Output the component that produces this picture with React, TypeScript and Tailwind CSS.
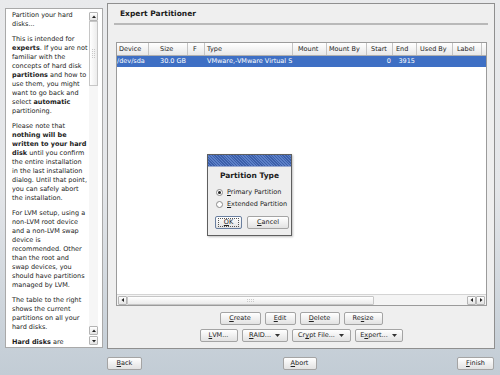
import React from "react";

type Seg = string | { b: string };

const helpText: Seg[][][] = [
  [["Partition your hard"], ["disks..."]],
  [
    ["This is intended for"],
    [{ b: "experts" }, ". If you are not"],
    ["familiar with the"],
    ["concepts of hard disk"],
    [{ b: "partitions" }, " and how to"],
    ["use them, you might"],
    ["want to go back and"],
    ["select ", { b: "automatic" }],
    ["partitioning."],
  ],
  [
    ["Please note that"],
    [{ b: "nothing will be" }],
    [{ b: "written to your hard" }],
    [{ b: "disk" }, " until you confirm"],
    ["the entire installation"],
    ["in the last installation"],
    ["dialog. Until that point,"],
    ["you can safely abort"],
    ["the installation."],
  ],
  [
    ["For LVM setup, using a"],
    ["non-LVM root device"],
    ["and a non-LVM swap"],
    ["device is"],
    ["recommended. Other"],
    ["than the root and"],
    ["swap devices, you"],
    ["should have partitions"],
    ["managed by LVM."],
  ],
  [
    ["The table to the right"],
    ["shows the current"],
    ["partitions on all your"],
    ["hard disks."],
  ],
  [[{ b: "Hard disks" }, " are"]],
];

const columns = [
  { name: "Device", w: "w-[32px]", pl: "pl-[2px]", value: "/dev/sda", align: "left" },
  { name: "Size", w: "w-[39px]", pl: "pl-[11px]", value: "30.0 GB", align: "left" },
  { name: "F", w: "w-[17px]", pl: "pl-[5px]", value: "", align: "left" },
  { name: "Type", w: "w-[88px]", pl: "pl-[2px]", value: "VMware,-VMware Virtual S", align: "left" },
  { name: "Mount", w: "w-[34px]", pl: "pl-[5px]", value: "", align: "left" },
  { name: "Mount By", w: "w-[40px]", pl: "pl-[2px]", value: "", align: "left" },
  { name: "Start", w: "w-[26px]", pl: "pl-[4px]", value: "0", align: "right" },
  { name: "End", w: "w-[24px]", pl: "pl-[3px]", value: "3915", align: "right" },
  { name: "Used By", w: "w-[36px]", pl: "pl-[3px]", value: "", align: "left" },
  { name: "Label", w: "w-[29px]", pl: "pl-[4px]", value: "", align: "left" },
];

function Btn({
  w,
  children,
  focus,
}: {
  w: string;
  children: React.ReactNode;
  focus?: boolean;
}) {
  return (
    <div
      className={`${w} h-[13px] flex items-center justify-center rounded-[2px] border ${
        focus ? "border-[#6a7f9f]" : "border-[#a4a4a4]"
      } bg-gradient-to-b from-white to-[#e2e2e2] text-[6.5px] leading-none text-[#222] whitespace-nowrap`}
    >
      {focus ? (
        <div className="flex items-center justify-center w-[calc(100%-4px)] h-[9px] border border-dotted border-[#555]">
          {children}
        </div>
      ) : (
        children
      )}
    </div>
  );
}

const U = ({ c }: { c: string }) => <span className="underline">{c}</span>;

const Arrow = () => (
  <svg width="5" height="3" viewBox="0 0 5 3" className="ml-[4px]">
    <polygon points="0,0 5,0 2.5,3" fill="#333" />
  </svg>
);

function ScrollBtn({ dir }: { dir: "up" | "down" | "left" | "right" }) {
  const pts = {
    up: "1,4 3,1.5 5,4",
    down: "1,2 3,4.5 5,2",
    left: "4,1 1.5,3 4,5",
    right: "2,1 4.5,3 2,5",
  }[dir];
  return (
    <div className="w-[9px] h-[9px] flex items-center justify-center border border-[#b4b4b4] rounded-[1px] bg-gradient-to-b from-white to-[#e4e4e4]">
      <svg width="6" height="6" viewBox="0 0 6 6">
        <polygon points={pts} fill="#222" />
      </svg>
    </div>
  );
}

export default function App() {
  return (
    <div className="w-[500px] h-[375px] overflow-hidden flex flex-col font-['DejaVu_Sans',sans-serif] text-[#1b1b1b] bg-gradient-to-b from-[#e9eaec] via-[#e4e6e9] to-[#c2ccd5]">
      <div className="flex h-[349px] pt-[3px] pl-[5px]">
        {/* help panel */}
        <div className="mt-[5px] w-[98px] h-[340px] border border-[#a9a9a9] bg-white flex">
          <div className="flex-1 pl-[6px] pt-[2px] overflow-hidden text-[6.5px] leading-[9px]">
            {helpText.map((para, i) => (
              <div key={i} className={i > 0 ? "mt-[6px]" : ""}>
                {para.map((line, j) => (
                  <div key={j} className="whitespace-nowrap">
                    {line.map((s, k) =>
                      typeof s === "string" ? (
                        <span key={k}>{s}</span>
                      ) : (
                        <b key={k}>{s.b}</b>
                      )
                    )}
                  </div>
                ))}
              </div>
            ))}
          </div>
          <div className="w-[11px] mr-[3px] mt-[3px] mb-[2px] flex flex-col items-center">
            <ScrollBtn dir="up" />
            <div className="flex-1 w-[9px] flex flex-col">
              <div className="h-[65px] border border-[#c6c6c6] bg-gradient-to-r from-white to-[#ececec] flex items-center justify-center">
                <div className="grid grid-cols-2 gap-[1px]">
                  {Array.from({ length: 10 }).map((_, i) => (
                    <div key={i} className="w-[1px] h-[1px] bg-[#c8c8c8]" />
                  ))}
                </div>
              </div>
              <div className="flex-1 bg-[#f6f6f6]" />
            </div>
            <ScrollBtn dir="up" />
            <div className="h-[1px]" />
            <ScrollBtn dir="down" />
          </div>
        </div>

        {/* main panel */}
        <div className="ml-[4px] w-[388px] h-[346px] border border-[#8f8f8f] bg-[#efefef] flex flex-col relative">
          <div className="pt-[5px] pl-[12px] text-[7.5px] leading-[10px] font-bold">
            Expert Partitioner
          </div>
          <div className="mt-[4px] mx-[6px] h-[2px] bg-[#b9b9b9]" />

          <div className="mt-[17px] ml-[8px] w-[371px] h-[264px] border border-[#9b9b9b] bg-white flex flex-col">
            <div className="flex h-[13px] border-b border-[#b0b0b0] bg-gradient-to-b from-white to-[#e8e8e8] text-[6.5px] leading-none">
              {columns.map((c) => (
                <div
                  key={c.name}
                  className={`${c.w} ${c.pl} shrink-0 h-full flex items-center border-r border-[#c4c4c4] whitespace-nowrap overflow-hidden`}
                >
                  {c.name}
                </div>
              ))}
              <div className="flex-1" />
            </div>
            <div className="flex h-[11px] bg-[#3e6fc4] text-white text-[6.5px] leading-none">
              {columns.map((c) => (
                <div
                  key={c.name}
                  className={`${c.w} shrink-0 h-full flex items-center whitespace-nowrap overflow-hidden ${
                    c.align === "right" ? "justify-end pr-[2px]" : c.name === "Device" ? "pl-[0px]" : c.pl
                  } ${c.name === "Type" ? "pl-[2px]" : ""}`}
                >
                  {c.value}
                </div>
              ))}
              <div className="flex-1" />
            </div>
            <div className="flex-1" />
            <div className="h-[11px] flex items-center border-t border-[#d4d4d4] bg-[#f4f4f4] pl-[1px] pr-[1px]">
              <ScrollBtn dir="left" />
              <div className="w-[247px] h-[9px] border border-[#c6c6c6] rounded-[1px] bg-gradient-to-b from-white to-[#ebebeb] flex items-center justify-center">
                <div className="grid grid-cols-4 gap-[1px]">
                  {Array.from({ length: 8 }).map((_, i) => (
                    <div key={i} className="w-[1px] h-[1px] bg-[#cacaca]" />
                  ))}
                </div>
              </div>
              <div className="flex-1" />
              <ScrollBtn dir="left" />
              <ScrollBtn dir="right" />
            </div>
          </div>

          <div className="mt-[6px] flex justify-center gap-[4px]">
            <Btn w="w-[41px]">
              <U c="C" />reate
            </Btn>
            <Btn w="w-[31px]">
              <U c="E" />dit
            </Btn>
            <Btn w="w-[40px]">
              <U c="D" />elete
            </Btn>
            <Btn w="w-[39px]">
              Re<U c="s" />ize
            </Btn>
          </div>
          <div className="mt-[4px] flex justify-center gap-[4px]">
            <Btn w="w-[38px]">
              <U c="L" />VM...
            </Btn>
            <Btn w="w-[46px]">
              <U c="R" />AID...
              <Arrow />
            </Btn>
            <Btn w="w-[59px]">
              Cr<U c="y" />pt File...
              <Arrow />
            </Btn>
            <Btn w="w-[48px]">
              E<U c="x" />pert...
              <Arrow />
            </Btn>
          </div>

          {/* Partition Type dialog */}
          <div className="absolute left-[99px] top-[150px] w-[85px] h-[82px] border border-[#5f5f5f] bg-[#eeeeee] flex flex-col shadow-[1px_1px_2px_rgba(0,0,0,0.25)]">
            <div className="h-[12px] border-b border-[#9aaad0] bg-[repeating-linear-gradient(45deg,#3c5fa9_0px,#3c5fa9_1px,#5c80c8_1px,#5c80c8_2px)]" />
            <div className="mt-[4px] text-center text-[7.5px] leading-[10px] font-bold">
              Partition Type
            </div>
            <div className="mt-[7px] pl-[8px] flex flex-col gap-[4px] text-[6.5px] leading-[8px]">
              <div className="flex items-center">
                <div className="w-[7px] h-[7px] rounded-full border border-[#8a8a8a] bg-white flex items-center justify-center">
                  <div className="w-[3px] h-[3px] rounded-full bg-[#222]" />
                </div>
                <span className="ml-[4px]">
                  <U c="P" />rimary Partition
                </span>
              </div>
              <div className="flex items-center">
                <div className="w-[7px] h-[7px] rounded-full border border-[#8a8a8a] bg-white" />
                <span className="ml-[4px]">
                  <U c="E" />xtended Partition
                </span>
              </div>
            </div>
            <div className="mt-[8px] pl-[7px] flex gap-[5px]">
              <Btn w="w-[27px]" focus>
                <U c="O" />K
              </Btn>
              <Btn w="w-[42px]">
                <U c="C" />ancel
              </Btn>
            </div>
          </div>
        </div>
      </div>

      {/* bottom bar */}
      <div className="flex items-start pt-[8px] pl-[107px] pr-[6px]">
        <Btn w="w-[35px]">
          <U c="B" />ack
        </Btn>
        <div className="flex-1 flex justify-center">
          <Btn w="w-[34px]">
            <U c="A" />bort
          </Btn>
        </div>
        <Btn w="w-[37px]">
          <U c="F" />inish
        </Btn>
      </div>
    </div>
  );
}
